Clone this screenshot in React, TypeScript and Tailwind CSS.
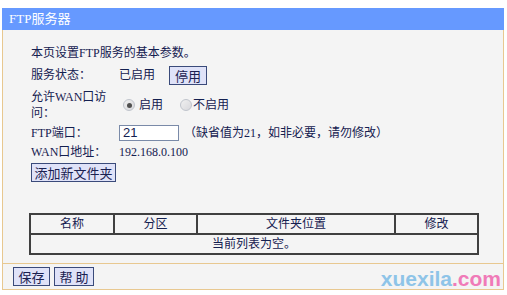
const FONT = { fontFamily: '"Liberation Serif", "Noto Sans CJK SC", serif' };

function Btn({ children, className = "" }: { children: React.ReactNode; className?: string }) {
  return (
    <button
      className={`h-[19px] whitespace-nowrap border border-[#3a4a7a] bg-[#dfe2f8] px-0 text-center text-[13px] leading-[17px] text-[#1a2050] ${className}`}
      style={{ fontFamily: '"Noto Sans CJK SC", sans-serif' }}
    >
      {children}
    </button>
  );
}

function Radio({ checked }: { checked?: boolean }) {
  return (
    <span className="inline-flex h-[12px] w-[12px] items-center justify-center rounded-full border border-[#c0c4cc] bg-gradient-to-br from-[#f0f0f0] to-[#d8d8dc]">
      {checked && <span className="h-[5px] w-[5px] rounded-full bg-[#505050]" />}
    </span>
  );
}

export default function App() {
  return (
    <div className="h-[295px] w-[507px] bg-white pt-[8px] pl-[2px] text-[12px] text-[#142050]" style={FONT}>
      <div className="w-[502px] border-x border-[#e8c890] bg-[#f4f4f4]">
        {/* Title */}
        <div className="-mx-px flex h-[22px] items-center bg-[#6699ff] pl-[7px] text-[13px] text-white">
          FTP服务器
        </div>

        {/* Settings */}
        <div className="pl-[28px] pt-[13px]">
          <div className="flex h-[20px] items-center">本页设置FTP服务的基本参数。</div>
          <div className="flex h-[24px] items-center">
            <span className="w-[88px]">服务状态：</span>
            <span className="w-[50px]">已启用</span>
            <Btn className="w-[38px]">停用</Btn>
          </div>
          <div className="flex items-center pt-[2px]">
            <span className="w-[88px] leading-[16px]">
              允许WAN口访
              <br />
              问：
            </span>
            <label className="flex items-center gap-[4px] pl-[4px]">
              <Radio checked />
              <span>启用</span>
            </label>
            <label className="ml-[17px] flex items-center gap-[1px]">
              <Radio />
              <span>不启用</span>
            </label>
          </div>
          <div className="flex h-[22px] items-center pt-[2px]">
            <span className="w-[88px]">FTP端口：</span>
            <input
              value="21"
              readOnly
              className="h-[16px] w-[60px] border border-[#7a8aa8] bg-white px-[3px] text-[13px] text-[#142050]"
              style={{ fontFamily: '"Liberation Sans", sans-serif' }}
            />
            <span className="pl-[5px]">（缺省值为21，如非必要，请勿修改）</span>
          </div>
          <div className="flex h-[18px] items-center">
            <span className="w-[88px]">WAN口地址：</span>
            <span>192.168.0.100</span>
          </div>
          <div className="flex pt-[2px]">
            <Btn className="w-[85px]">添加新文件夹</Btn>
          </div>
        </div>

        {/* Folder table */}
        <div className="pl-[26px] pt-[31px] pb-[8px]">
          <table className="w-[450px] border-collapse border-2 border-[#404040] text-center">
            <tbody>
              <tr className="h-[20px]">
                <td className="w-[84px] border-2 border-[#404040]">名称</td>
                <td className="w-[83px] border-2 border-[#404040]">分区</td>
                <td className="w-[198px] border-2 border-[#404040]">文件夹位置</td>
                <td className="border-2 border-[#404040]">修改</td>
              </tr>
              <tr className="h-[20px]">
                <td colSpan={4}>当前列表为空。</td>
              </tr>
            </tbody>
          </table>
        </div>

        {/* Footer */}
        <div className="relative flex h-[27px] items-center gap-[4px] border-y border-[#e8c890] pl-[10px]">
          <Btn className="w-[37px]">保存</Btn>
          <Btn className="w-[40px]">帮 助</Btn>
          <span
            className="absolute right-[2px] top-[4px] text-[21px] font-bold leading-[22px]"
            style={{ fontFamily: '"Liberation Sans", sans-serif' }}
          >
            <span className="text-[#8ec4e8]">xuexila</span>
            <span className="text-[#f07ab8]">.com</span>
          </span>
        </div>
      </div>
    </div>
  );
}
